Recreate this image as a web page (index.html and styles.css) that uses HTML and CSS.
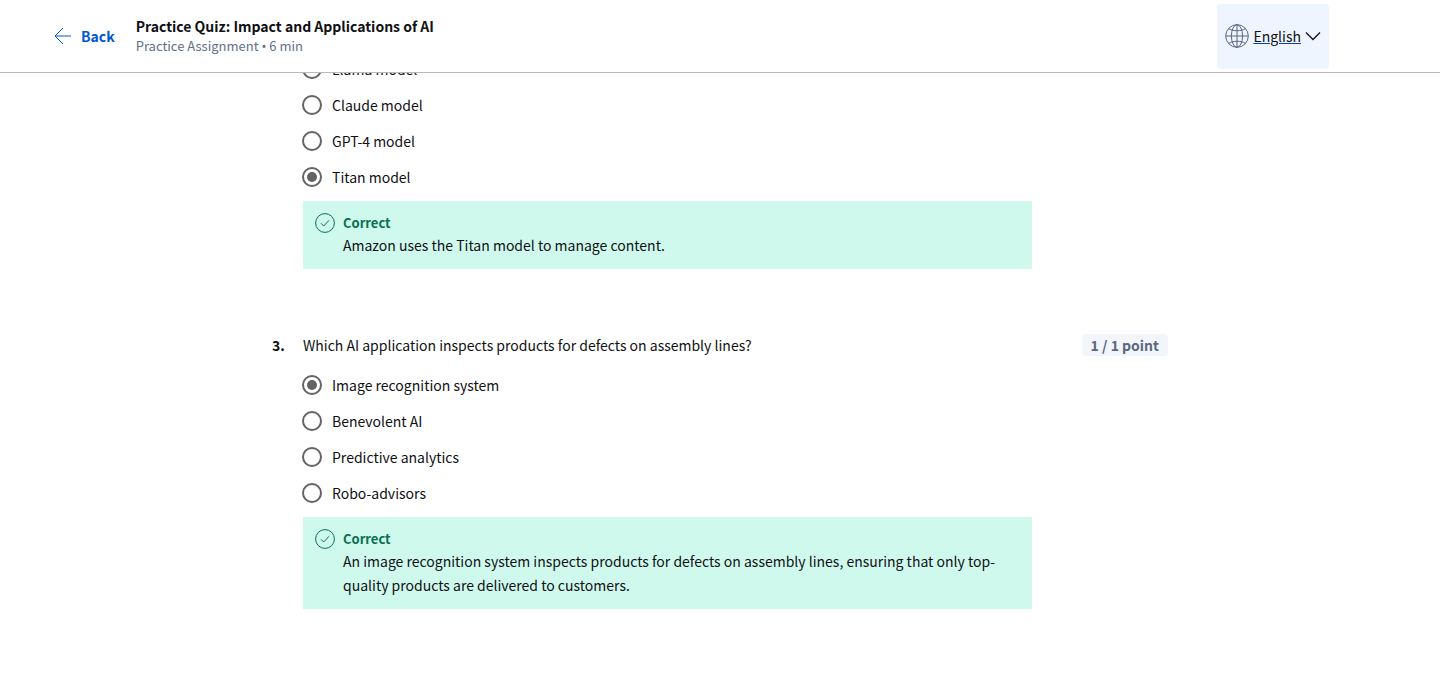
FILE: index.html
```html
<!DOCTYPE html>
<html lang="en">
<head>
<meta charset="utf-8">
<meta name="viewport" content="width=device-width, initial-scale=1">
<title>Practice Quiz: Impact and Applications of AI</title>
<link rel="stylesheet" href="styles.css">
</head>
<body>
<header class="topbar">
  <a class="back" href="#">
    <svg class="back-icon" viewBox="0 0 18 18" aria-hidden="true"><path d="M17 9H1.2M9 1 1 9l8 8"/></svg>
    <span>Back</span>
  </a>
  <div class="heading">
    <h1 class="title">Practice Quiz: Impact and Applications of AI</h1>
    <p class="subtitle">Practice Assignment <span class="bullet">•</span> 6 min</p>
  </div>
  <label class="language">
    <svg class="globe" viewBox="0 0 24 24" aria-hidden="true"><circle cx="12" cy="12" r="11.3"/><ellipse cx="12" cy="12" rx="5.6" ry="11.3"/><path d="M12 .7v22.6M.7 12h22.6M3.5 4.6c2.3 1.5 5.2 2.1 8.5 2.1s6.2-.6 8.5-2.1M3.5 19.4c2.3-1.5 5.2-2.1 8.5-2.1s6.2.6 8.5 2.1"/></svg>
    <select class="language-select" aria-label="Language"><option>English</option></select>
    <svg class="chevron" viewBox="0 0 16 10" aria-hidden="true"><path d="M1 1.5l7 7 7-7"/></svg>
  </label>
</header>
<main class="quiz">
  <section class="question">
    <div class="body">
      <div class="options" role="radiogroup" aria-label="Question 2">
        <label class="option"><input class="radio" type="radio" name="q2">Llama model</label>
        <label class="option"><input class="radio" type="radio" name="q2">Claude model</label>
        <label class="option"><input class="radio" type="radio" name="q2">GPT-4 model</label>
        <label class="option"><input class="radio" type="radio" name="q2" checked>Titan model</label>
      </div>
      <div class="feedback">
        <svg class="check" viewBox="0 0 20 20" aria-hidden="true"><circle cx="10" cy="10" r="9.4"/><path d="M6 10.3l2.7 2.7L14 7.3"/></svg>
        <div>
          <h3 class="verdict">Correct</h3>
          <p class="explanation">Amazon uses the Titan model to manage content.</p>
        </div>
      </div>
    </div>
  </section>
  <section class="question">
    <span class="number">3.</span>
    <div class="body">
      <p class="prompt" id="prompt3">Which AI application inspects products for defects on assembly lines?</p>
      <div class="options" role="radiogroup" aria-labelledby="prompt3">
        <label class="option"><input class="radio" type="radio" name="q3" checked>Image recognition system</label>
        <label class="option"><input class="radio" type="radio" name="q3">Benevolent AI</label>
        <label class="option"><input class="radio" type="radio" name="q3">Predictive analytics</label>
        <label class="option"><input class="radio" type="radio" name="q3">Robo-advisors</label>
      </div>
      <div class="feedback">
        <svg class="check" viewBox="0 0 20 20" aria-hidden="true"><circle cx="10" cy="10" r="9.4"/><path d="M6 10.3l2.7 2.7L14 7.3"/></svg>
        <div>
          <h3 class="verdict">Correct</h3>
          <p class="explanation">An image recognition system inspects products for defects on assembly lines, ensuring that only top-quality products are delivered to customers.</p>
        </div>
      </div>
    </div>
    <span class="points">1 / 1 point</span>
  </section>
</main>
</body>
</html>
```

FILE: styles.css
```css
* { box-sizing: border-box; }
body {
  margin: 0;
  background: #fff;
  color: #0f1114;
  font: 14px/24px "Noto Sans CJK SC", "Noto Sans", sans-serif;
}
h1, h3, p { margin: 0; }
svg { fill: none; stroke: currentColor; flex: none; }

.topbar {
  position: sticky;
  top: 0;
  z-index: 1;
  display: flex;
  align-items: center;
  height: 73px;
  padding: 0 111px 0 54px;
  background: #fff;
  border-bottom: 1px solid #bababa;
}
.back {
  display: flex;
  align-items: center;
  gap: 9px;
  margin-right: 21px;
  color: #0056d2;
  font-weight: 700;
  text-decoration: none;
}
.back-icon { width: 18px; height: 18px; }
.title { font-size: 14px; line-height: 20px; font-weight: 700; }
.subtitle { font-size: 13px; line-height: 20px; color: #636f8a; }
.bullet { font-family: "Noto Sans", sans-serif; line-height: 1; }

.language {
  display: flex;
  align-items: center;
  gap: 4px;
  height: 65px;
  margin-left: auto;
  padding: 0 8px;
  border-radius: 4px;
  background: #eef5ff;
}
.globe { width: 24px; height: 24px; color: #5b6780; }
.language-select {
  appearance: none;
  field-sizing: content;
  padding: 0;
  border: 0;
  background: none;
  color: inherit;
  font: inherit;
  text-decoration: underline #0048b0;
}
.chevron { width: 16px; height: 10px; stroke-width: 1.3; }

.quiz {
  display: grid;
  gap: 64px;
  max-width: 896px;
  margin: -22px auto 80px;
}
.question {
  display: grid;
  grid-template-columns: 31px minmax(0, 1fr) 136px;
}
.body { grid-column: 2; }
.number { font-weight: 700; }
.prompt { margin-bottom: 10px; }
.points {
  justify-self: end;
  align-self: start;
  margin-top: 1px;
  padding: 0 9px;
  border-radius: 4px;
  background: #f2f5fa;
  color: #5b6780;
  font-weight: 700;
  line-height: 22px;
}
.option {
  display: flex;
  align-items: center;
  gap: 10px;
  height: 36px;
  margin-left: -1px;
}
.radio {
  appearance: none;
  display: grid;
  place-items: center;
  width: 20px;
  height: 20px;
  margin: 0;
  border: 2px solid #636363;
  border-radius: 50%;
}
.radio:checked::before {
  content: "";
  width: 10px;
  height: 10px;
  border-radius: 50%;
  background: #636363;
}
.feedback {
  display: flex;
  gap: 8px;
  margin-top: 6px;
  padding: 12px;
  background: #d0f9ee;
}
.check { width: 20px; height: 20px; color: #087051; }
.verdict { font-size: 13px; line-height: 20px; font-weight: 700; color: #087051; }
```
